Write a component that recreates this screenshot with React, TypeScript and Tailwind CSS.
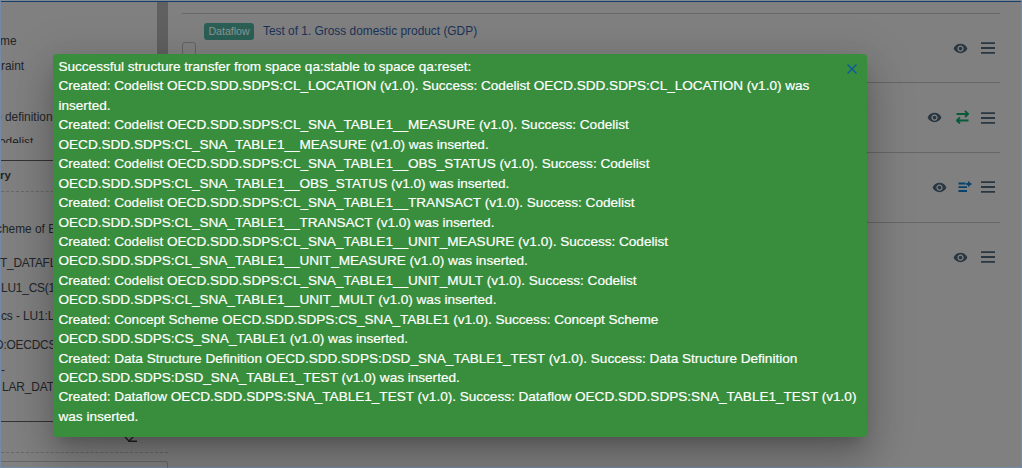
import React from "react";
import { MdVisibility } from "react-icons/md";

const lines = [
  "Successful structure transfer from space qa:stable to space qa:reset:",
  "Created: Codelist OECD.SDD.SDPS:CL_LOCATION (v1.0). Success: Codelist OECD.SDD.SDPS:CL_LOCATION (v1.0) was",
  "inserted.",
  "Created: Codelist OECD.SDD.SDPS:CL_SNA_TABLE1__MEASURE (v1.0). Success: Codelist",
  "OECD.SDD.SDPS:CL_SNA_TABLE1__MEASURE (v1.0) was inserted.",
  "Created: Codelist OECD.SDD.SDPS:CL_SNA_TABLE1__OBS_STATUS (v1.0). Success: Codelist",
  "OECD.SDD.SDPS:CL_SNA_TABLE1__OBS_STATUS (v1.0) was inserted.",
  "Created: Codelist OECD.SDD.SDPS:CL_SNA_TABLE1__TRANSACT (v1.0). Success: Codelist",
  "OECD.SDD.SDPS:CL_SNA_TABLE1__TRANSACT (v1.0) was inserted.",
  "Created: Codelist OECD.SDD.SDPS:CL_SNA_TABLE1__UNIT_MEASURE (v1.0). Success: Codelist",
  "OECD.SDD.SDPS:CL_SNA_TABLE1__UNIT_MEASURE (v1.0) was inserted.",
  "Created: Codelist OECD.SDD.SDPS:CL_SNA_TABLE1__UNIT_MULT (v1.0). Success: Codelist",
  "OECD.SDD.SDPS:CL_SNA_TABLE1__UNIT_MULT (v1.0) was inserted.",
  "Created: Concept Scheme OECD.SDD.SDPS:CS_SNA_TABLE1 (v1.0). Success: Concept Scheme",
  "OECD.SDD.SDPS:CS_SNA_TABLE1 (v1.0) was inserted.",
  "Created: Data Structure Definition OECD.SDD.SDPS:DSD_SNA_TABLE1_TEST (v1.0). Success: Data Structure Definition",
  "OECD.SDD.SDPS:DSD_SNA_TABLE1_TEST (v1.0) was inserted.",
  "Created: Dataflow OECD.SDD.SDPS:SNA_TABLE1_TEST (v1.0). Success: Dataflow OECD.SDD.SDPS:SNA_TABLE1_TEST (v1.0)",
  "was inserted.",
];

function Eye() {
  return <MdVisibility className="size-[15px] text-[#293742]" />;
}

function Menu() {
  return (
    <svg className="h-[12px] w-[14px]" viewBox="0 0 14 12" stroke="#293742" strokeWidth="1.8">
      <path d="M0 1.2H14M0 6H14M0 10.8H14" />
    </svg>
  );
}

function Transfer() {
  return (
    <svg className="h-[14px] w-[13px]" viewBox="0 0 13 14" fill="none" stroke="#075b38" strokeWidth="1.8">
      <path d="M0.5 4H12M9 0.8L12.2 4L9 7M12.5 10.5H1M4 7.3L0.8 10.5L4 13.5" />
    </svg>
  );
}

function AddToList() {
  return (
    <svg className="h-[12px] w-[14px]" viewBox="0 0 14 12" fill="none" stroke="#07436b" strokeWidth="1.8">
      <path d="M0.5 2.5H7.5M0.5 6.2H9M0.5 10H9M10.8 0.5V5.5M8.2 3H13.4" />
    </svg>
  );
}

function Row({ height, children, actions }: { height: string; children?: React.ReactNode; actions: React.ReactNode }) {
  return (
    <div className={`flex shrink-0 justify-between border-t border-[#676767] pr-[5px] ${height}`}>
      <div>{children}</div>
      <div className="flex items-center">{actions}</div>
    </div>
  );
}

function Item({ top, left = "", children }: { top: string; left?: string; children: React.ReactNode }) {
  return <div className={`h-[16px] shrink-0 leading-[16px] ${top} ${left}`}>{children}</div>;
}

export default function App() {
  return (
    <div className="relative h-[468px] w-[1022px] overflow-hidden bg-[#808080] font-['Liberation_Sans',Arial,sans-serif] text-[11.9px] text-[#222529]">
      <div className="flex h-full border border-[#7589a8] border-t-[#7f8995]">
        <div className="flex min-w-0 flex-1 border-t border-[#173f68]">
          <aside className="flex w-[167px] shrink-0 flex-col whitespace-nowrap">
            <div className="flex h-[141px] shrink-0 overflow-hidden">
              <div className="flex flex-1 flex-col overflow-hidden">
                <Item top="mt-[31px]" left="-ml-[1px]">me</Item>
                <Item top="mt-[9px]">raint</Item>
                <Item top="mt-[35px]" left="-ml-[6px]">e definition</Item>
                <Item top="mt-[9px]" left="-ml-[2px]">odelist</Item>
              </div>
              <div className="w-[11px] bg-[#606060]" />
            </div>
            <div className="mt-[17px] h-[1px] shrink-0 bg-[#333]" />
            <Item top="mt-[6px]" left="-ml-[1px] font-bold text-[11.5px]">ry</Item>
            <div className="mt-[8px] shrink-0 border-t border-dashed border-[#686868]" />
            <Item top="mt-[29px]" left="-ml-[5px]">cheme of E</Item>
            <Item top="mt-[18px]" left="-ml-[1px] tracking-[-0.2px]">T_DATAFL</Item>
            <Item top="mt-[9px]" left="tracking-[-0.2px]">LU1_CS(1</Item>
            <Item top="mt-[12px]" left="tracking-[-0.1px]">cs - LU1:L</Item>
            <Item top="mt-[13px]" left="-ml-[6px] tracking-[-0.2px]">D:OECDCS</Item>
            <Item top="mt-[9px]">-</Item>
            <Item top="mt-[1px]" left="ml-[1px] tracking-[-0.1px]">LAR_DAT</Item>
            <div className="mt-[26px] h-[1px] shrink-0 bg-[#333]" />
            <div className="flex h-[31px] shrink-0 items-end justify-end border-b border-dashed border-[#686868] pr-[31px] pb-[10px]">
              <svg className="h-[12px] w-[13px]" viewBox="0 0 13 12" fill="none" stroke="#222" strokeWidth="1.4">
                <path d="M1 7L8 0L12 4L5 11L1 7M4 11.2H13" />
              </svg>
            </div>
            <div className="mt-[8px] h-[8px] shrink-0 rounded-tr-[3px] border-t border-r border-[#686868]" />
          </aside>
          <main className="ml-[14px] flex w-[818px] flex-col pt-[11px]">
            <Row height="h-[69px]" actions={<div className="flex gap-[13px]"><Eye /><span className="mt-[1px]"><Menu /></span></div>}>
              <div className="flex h-full flex-col">
                <div className="mt-[9px] ml-[22px] flex items-center">
                  <span className="flex h-[17px] w-[50px] items-center justify-center rounded-[3px] bg-[#2b6056] text-[10.6px] text-[#8c9693]">Dataflow</span>
                  <span className="ml-[9px] leading-[17px] text-[#1b3257]">Test of 1. Gross domestic product (GDP)</span>
                </div>
                <div className="mt-[2px] size-[14px] rounded-[3px] border border-[#646464]" />
              </div>
            </Row>
            <Row height="h-[70px]" actions={<div className="flex"><Eye /><span className="ml-[14px]"><Transfer /></span><span className="mt-[2px] ml-[12px]"><Menu /></span></div>} />
            <Row height="h-[70px]" actions={<div className="flex"><Eye /><span className="mt-[1px] ml-[11px]"><AddToList /></span><span className="mt-[1px] ml-[9px]"><Menu /></span></div>} />
            <Row height="h-[69px]" actions={<div className="flex gap-[13px]"><Eye /><span className="mt-[1px]"><Menu /></span></div>} />
          </main>
        </div>
      </div>

      <div role="dialog" className="absolute top-[54px] left-[53px] flex h-[383px] w-[814px] rounded-[4px] bg-[#388e3c] pt-[3px] pl-[5.5px] text-[13.6px] leading-[19.43px] tracking-[-0.017px] text-white [-webkit-text-stroke:0.2px_white] shadow-[0px_11px_15px_-7px_rgba(0,0,0,0.2),0px_24px_38px_3px_rgba(0,0,0,0.14),0px_9px_46px_8px_rgba(0,0,0,0.12)]">
        <div className="min-w-0 whitespace-nowrap">
          {lines.map((line, i) => (
            <div key={i}>{line}</div>
          ))}
        </div>
        <button aria-label="Close" className="absolute top-[10px] right-[10px]">
          <svg className="size-[10px]" viewBox="0 0 10 10" stroke="#0d57a5" strokeWidth="1.4">
            <path d="M0.5 0.5L9.5 9.5M9.5 0.5L0.5 9.5" />
          </svg>
        </button>
      </div>
    </div>
  );
}
